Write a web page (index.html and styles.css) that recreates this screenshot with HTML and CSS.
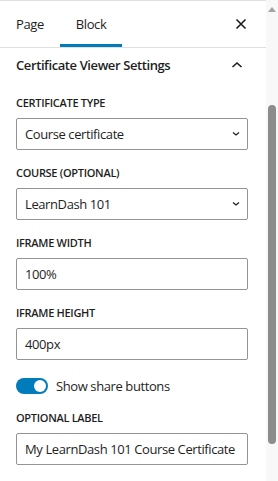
FILE: index.html
```html
<!DOCTYPE html>
<html lang="en">

<head>
  <meta charset="UTF-8">
  <meta name="viewport" content="width=device-width, initial-scale=1.0">
  <title>Block settings</title>
  <link rel="stylesheet" href="styles.css">
</head>

<body>
  <div class="app">
    <div class="sidebar">
      <div class="tabs">
        <div class="tab">Page</div>
        <div class="tab tab-active">Block</div>
        <div class="tabs-spacer"></div>
        <button class="icon-button" aria-label="Close">
          <svg width="24" height="24" viewBox="0 0 24 24">
            <path d="M7.5 7.5l9 9M16.5 7.5l-9 9" stroke="#1e1e1e" stroke-width="1.6" fill="none" />
          </svg>
        </button>
      </div>

      <div class="section-head">
        <span class="section-title">Certificate Viewer Settings</span>
        <svg width="24" height="24" viewBox="0 0 24 24">
          <path d="M7.5 14l4.5-4 4.5 4" stroke="#1e1e1e" stroke-width="1.6" fill="none" />
        </svg>
      </div>

      <div class="fields">
        <div class="field">
          <label class="field-label">Certificate type</label>
          <div class="control select">
            <span>Course certificate</span>
            <svg width="12" height="12" viewBox="0 0 12 12">
              <path d="M3 4.5l3 2.5 3-2.5" stroke="#1e1e1e" stroke-width="1.2" fill="none" />
            </svg>
          </div>
        </div>

        <div class="field">
          <label class="field-label">Course (optional)</label>
          <div class="control select">
            <span>LearnDash 101</span>
            <svg width="12" height="12" viewBox="0 0 12 12">
              <path d="M3 4.5l3 2.5 3-2.5" stroke="#1e1e1e" stroke-width="1.2" fill="none" />
            </svg>
          </div>
        </div>

        <div class="field">
          <label class="field-label">iFrame width</label>
          <div class="control">100%</div>
        </div>

        <div class="field">
          <label class="field-label">iFrame height</label>
          <div class="control">400px</div>
        </div>

        <div class="toggle-row">
          <span class="toggle"><span class="knob"></span></span>
          <span>Show share buttons</span>
        </div>

        <div class="field">
          <label class="field-label">Optional label</label>
          <div class="control">My LearnDash 101 Course Certificate</div>
        </div>
      </div>
    </div>

    <div class="scrollbar">
      <div class="arrow"></div>
      <div class="thumb"></div>
    </div>
  </div>
</body>

</html>
```

FILE: styles.css
```css
* {
  box-sizing: border-box;
}

body {
  margin: 0;
  font-family: "Open Sans", "Noto Sans", sans-serif;
  color: #1e1e1e;
  background: #fff;
  letter-spacing: -0.4px;
}

.app {
  display: flex;
  height: 481px;
  overflow: hidden;
}

.sidebar {
  flex: 1;
  border-top: 1px solid #e0e0e0;
}

.tabs {
  display: flex;
  align-items: center;
  height: 47px;
  border-bottom: 1px solid #e0e0e0;
  padding-right: 13px;
}

.tab {
  height: 100%;
  display: flex;
  align-items: center;
  padding: 0 16px;
  font-size: 13px;
  border-bottom: 3px solid transparent;
  padding-top: 2px;
}

.tab-active {
  border-bottom-color: #007cba;
}

.tabs-spacer {
  flex: 1;
}

.icon-button {
  border: 0;
  background: none;
  padding: 0;
  width: 24px;
  height: 24px;
  margin-top: -1px;
}

.section-head {
  display: flex;
  align-items: center;
  justify-content: space-between;
  padding: 0 17px 0 16px;
  height: 33px;
}

.section-title {
  font-size: 13px;
  font-weight: 600;
}

.fields {
  padding: 14px 18px 0 16px;
}

.field {
  margin-bottom: 15px;
}

.field-label {
  display: block;
  font-size: 11px;
  font-weight: 600;
  text-transform: uppercase;
  letter-spacing: -0.3px;
  line-height: 16px;
  margin-bottom: 7px;
}

.control {
  display: flex;
  align-items: center;
  justify-content: space-between;
  height: 32px;
  border: 1px solid #949494;
  border-radius: 2px;
  padding: 0 8px;
  font-size: 13px;
}

.select {
  padding-right: 5px;
}

.toggle-row {
  display: flex;
  align-items: center;
  gap: 8px;
  font-size: 13px;
  margin-top: 17px;
  margin-bottom: 15px;
}

.toggle {
  display: flex;
  justify-content: flex-end;
  align-items: center;
  width: 32px;
  height: 16px;
  border-radius: 8px;
  background: #007cba;
  padding: 0 2px;
}

.knob {
  width: 12px;
  height: 12px;
  border-radius: 50%;
  background: #fff;
}

.scrollbar {
  width: 12px;
  background: #f8f8f8;
  display: flex;
  flex-direction: column;
  align-items: center;
}

.arrow {
  margin-top: 7px;
  width: 0;
  height: 0;
  border-left: 4px solid transparent;
  border-right: 4px solid transparent;
  border-bottom: 5px solid #a3a3a3;
}

.thumb {
  margin-top: 93px;
  width: 8px;
  height: 339px;
  border-radius: 4px;
  background: #8c8c8c;
}
```
